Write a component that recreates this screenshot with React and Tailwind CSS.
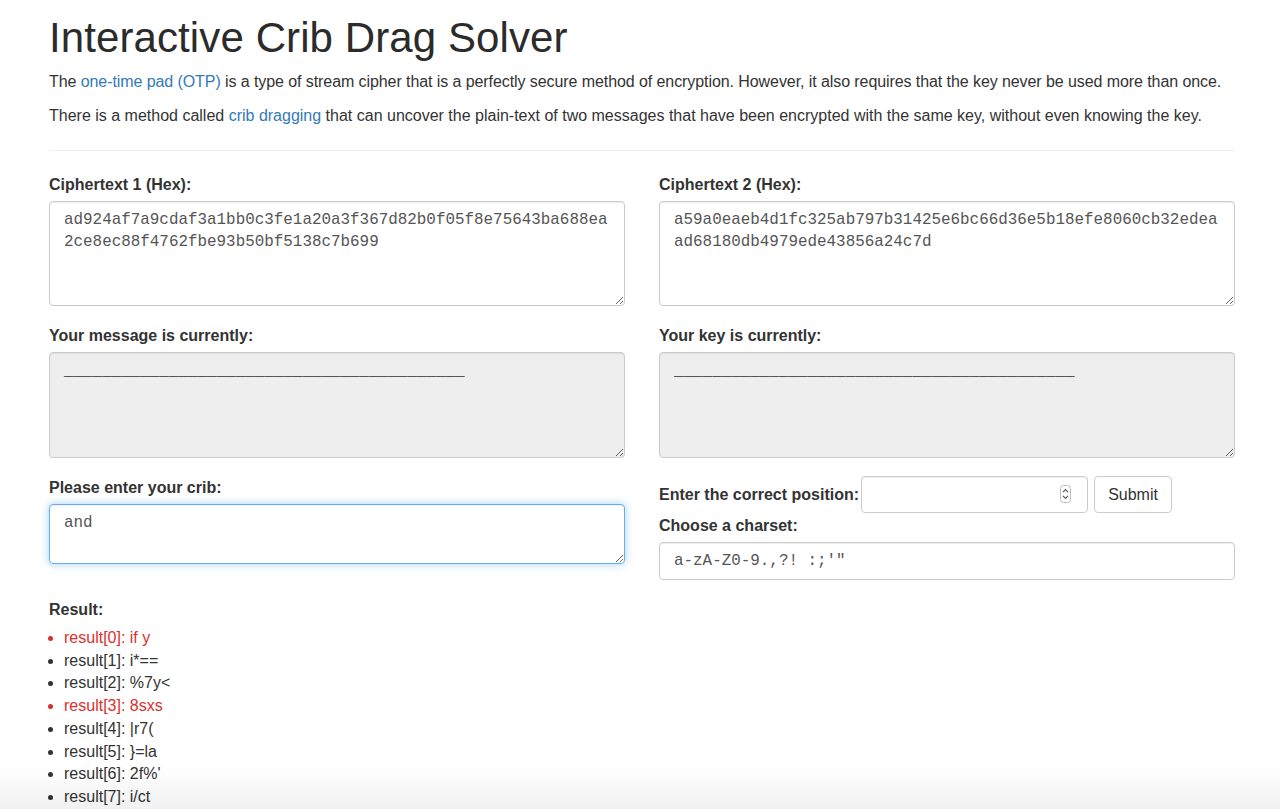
import React from "react";

const SANS = "font-['Liberation_Sans','Helvetica_Neue',Arial,sans-serif]";
const MONO = "font-['Liberation_Mono','Courier_New',monospace]";

const base =
  "block w-full rounded-[4px] border px-[14px] py-[7px] text-[15.9px] leading-[22px] text-[#555] outline-none " + MONO;
const field = base + " border-[#ccc] shadow-[inset_0_1px_1px_rgba(0,0,0,0.075)]";
const focused =
  base + " border-[#66afe9] shadow-[inset_0_1px_1px_rgba(0,0,0,0.075),0_0_8px_rgba(102,175,233,0.6)]";

const results = [
  { t: "result[0]: if y", red: true },
  { t: "result[1]: i*==" },
  { t: "result[2]: %7y<" },
  { t: "result[3]: 8sxs", red: true },
  { t: "result[4]: |r7(" },
  { t: "result[5]: }=la" },
  { t: "result[6]: 2f%'" },
  { t: "result[7]: i/ct" },
];

function Label({ children, className = "" }) {
  return (
    <label className={"block text-[16px] font-bold leading-[23px] text-[#333] " + className}>
      {children}
    </label>
  );
}

function Spinner() {
  return (
    <svg width="11" height="18" viewBox="0 0 11 18" className="absolute right-[17px] top-[9px]">
      <rect x="0.5" y="0.5" width="10" height="17" rx="3" fill="#fff" stroke="#bbb" />
      <path d="M3 7.2 L5.5 4.6 L8 7.2" fill="none" stroke="#555" strokeWidth="1.1" />
      <path d="M3 10.8 L5.5 13.4 L8 10.8" fill="none" stroke="#555" strokeWidth="1.1" />
    </svg>
  );
}

export default function App() {
  const blanks = "_".repeat(42);
  return (
    <div className={"min-h-[809px] bg-white text-[16px] text-[#333] " + SANS}>
      <div className="pl-[49px] pr-[45px] pt-[15px]">
        <h1 className="text-[42px] leading-[45px] font-normal tracking-[0.1px] text-[#2b2b2b]">
          Interactive Crib Drag Solver
        </h1>
        <p className="mt-[10px] leading-[23px] tracking-[-0.08px] whitespace-nowrap">
          The <a className="text-[#337ab7]">one-time pad (OTP)</a> is a type of stream cipher that is a perfectly secure method of encryption. However, it also requires that the key never be used more than once.
        </p>
        <p className="mt-[11px] leading-[23px] whitespace-nowrap">
          There is a method called <a className="text-[#337ab7]">crib dragging</a> that can uncover the plain-text of two messages that have been encrypted with the same key, without even knowing the key.
        </p>
        <hr className="mt-[23px] border-0 border-t border-[#eee]" />

        <div className="mt-[22px] grid grid-cols-2 gap-x-[34px]">
          {/* left column */}
          <div>
            <Label>Ciphertext 1 (Hex):</Label>
            <textarea
              readOnly
              className={field + " mt-[5px] h-[105px]"}
              value={"ad924af7a9cdaf3a1bb0c3fe1a20a3f367d82b0f05f8e75643ba688ea\n2ce8ec88f4762fbe93b50bf5138c7b699"}
            />
            <Label className="mt-[18px]">Your message is currently:</Label>
            <textarea readOnly className={field + " mt-[5px] h-[106px] bg-[#eee]"} value={blanks} />
            <Label className="mt-[18px]">Please enter your crib:</Label>
            <textarea readOnly className={focused + " mt-[5px] h-[60px]"} value="and" />
          </div>

          {/* right column */}
          <div>
            <Label>Ciphertext 2 (Hex):</Label>
            <textarea
              readOnly
              className={field + " mt-[5px] h-[105px]"}
              value={"a59a0eaeb4d1fc325ab797b31425e6bc66d36e5b18efe8060cb32edea\nad68180db4979ede43856a24c7d"}
            />
            <Label className="mt-[18px]">Your key is currently:</Label>
            <textarea readOnly className={field + " mt-[5px] h-[106px] bg-[#eee]"} value={blanks} />
            <div className="mt-[18px] flex items-center h-[37px]">
              <Label className="mr-[2px]">Enter the correct position:</Label>
              <div className="relative w-[227px] h-[37px]">
                <input className={field + " h-[37px]"} readOnly />
                <Spinner />
              </div>
              <button className="ml-[6px] h-[37px] w-[78px] rounded-[4px] border border-[#ccc] bg-white text-[16px] text-[#333]">
                Submit
              </button>
            </div>
            <Label className="mt-[1px]">Choose a charset:</Label>
            <input readOnly className={field + " mt-[5px] h-[38px]"} value={"a-zA-Z0-9.,?! :;'\""} />
          </div>
        </div>

        <Label className="mt-[18px]">Result:</Label>
        <ul className="mt-[6px] list-disc pl-[15px] leading-[22.7px] marker:text-[#333]">
          {results.map((r) => (
            <li key={r.t} className={r.red ? "text-[#d9302c] marker:text-[#d9302c]" : "text-[#333]"}>
              {r.t}
            </li>
          ))}
        </ul>
      </div>
      <div className="pointer-events-none fixed bottom-0 left-0 right-0 h-[42px] bg-gradient-to-b from-transparent to-[rgba(0,0,0,0.06)]" />
    </div>
  );
}
